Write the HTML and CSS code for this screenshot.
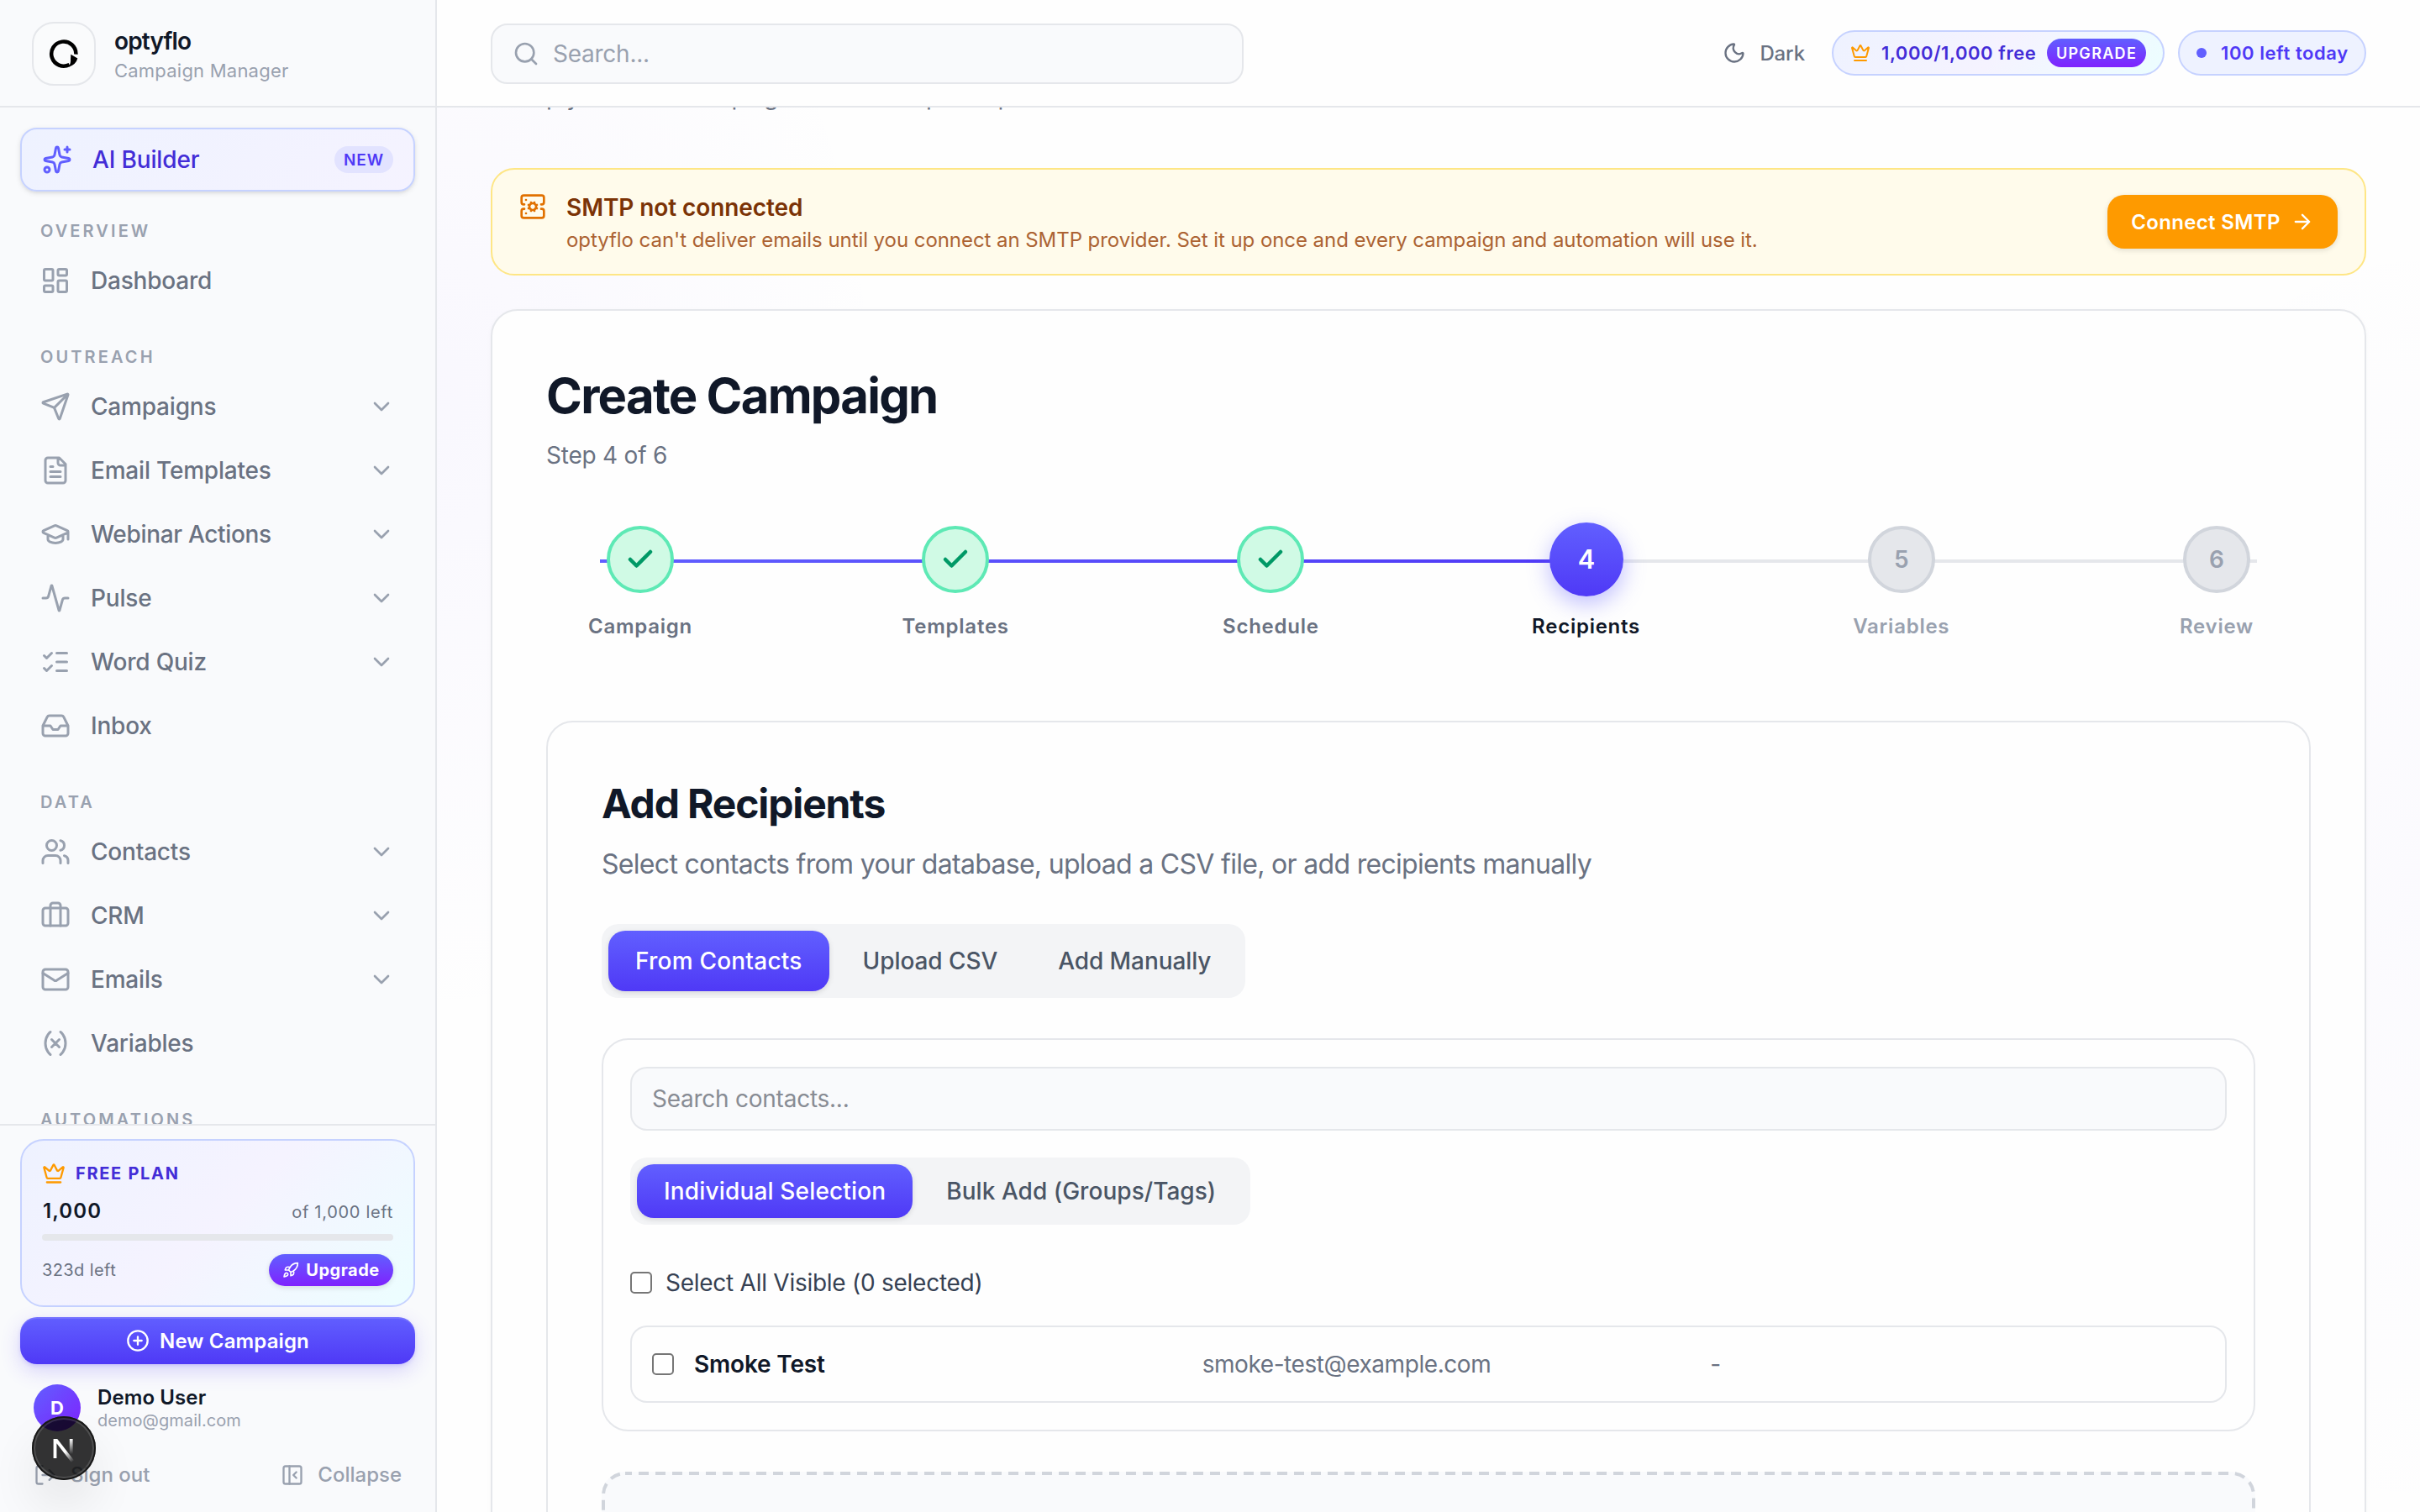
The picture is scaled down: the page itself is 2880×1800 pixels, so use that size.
FILE: index.html
```html
<!DOCTYPE html>
<html lang="en">
<head>
<meta charset="utf-8">
<title>optyflo – Create Campaign</title>
<link rel="stylesheet" href="styles.css">
</head>
<body>
<svg class="sprite" aria-hidden="true">
  <symbol id="sparkles" viewBox="0 0 24 24"><path d="M11.017 2.814a1 1 0 0 1 1.966 0l1.051 5.558a2 2 0 0 0 1.594 1.594l5.558 1.051a1 1 0 0 1 0 1.966l-5.558 1.051a2 2 0 0 0-1.594 1.594l-1.051 5.558a1 1 0 0 1-1.966 0l-1.051-5.558a2 2 0 0 0-1.594-1.594l-5.558-1.051a1 1 0 0 1 0-1.966l5.558-1.051a2 2 0 0 0 1.594-1.594z"/><path d="M20 2v4M22 4h-4"/><circle cx="4" cy="20" r="2"/></symbol>
  <symbol id="dashboard" viewBox="0 0 24 24"><rect x="3" y="3" width="7" height="9" rx="1"/><rect x="14" y="3" width="7" height="5" rx="1"/><rect x="14" y="12" width="7" height="9" rx="1"/><rect x="3" y="16" width="7" height="5" rx="1"/></symbol>
  <symbol id="send" viewBox="0 0 24 24"><path d="M14.536 21.686a.5.5 0 0 0 .937-.024l6.5-19a.496.496 0 0 0-.635-.635l-19 6.5a.5.5 0 0 0-.024.937l7.93 3.18a2 2 0 0 1 1.112 1.11zM21.854 2.147l-10.94 10.939"/></symbol>
  <symbol id="file" viewBox="0 0 24 24"><path d="M15 2H6a2 2 0 0 0-2 2v16a2 2 0 0 0 2 2h12a2 2 0 0 0 2-2V7ZM14 2v4a2 2 0 0 0 2 2h4M10 9H8M16 13H8M16 17H8"/></symbol>
  <symbol id="cap" viewBox="0 0 24 24"><path d="M21.42 10.922a1 1 0 0 0-.019-1.838L12.83 5.18a2 2 0 0 0-1.66 0L2.6 9.08a1 1 0 0 0 0 1.832l8.57 3.908a2 2 0 0 0 1.66 0zM22 10v6M6 12.5V16a6 3 0 0 0 12 0v-3.5"/></symbol>
  <symbol id="activity" viewBox="0 0 24 24"><path d="M22 12h-2.48a2 2 0 0 0-1.93 1.46l-2.35 8.36a.25.25 0 0 1-.48 0L9.24 2.18a.25.25 0 0 0-.48 0l-2.35 8.36A2 2 0 0 1 4.49 12H2"/></symbol>
  <symbol id="checks" viewBox="0 0 24 24"><path d="M13 5h8M13 12h8M13 19h8M3 17l2 2 4-4M3 7l2 2 4-4"/></symbol>
  <symbol id="inbox" viewBox="0 0 24 24"><path d="M22 12h-6l-2 3h-4l-2-3H2M5.45 5.11 2 12v6a2 2 0 0 0 2 2h16a2 2 0 0 0 2-2v-6l-3.45-6.89A2 2 0 0 0 16.76 4H7.24a2 2 0 0 0-1.79 1.11z"/></symbol>
  <symbol id="users" viewBox="0 0 24 24"><path d="M16 21v-2a4 4 0 0 0-4-4H6a4 4 0 0 0-4 4v2M16 3.128a4 4 0 0 1 0 7.744M22 21v-2a4 4 0 0 0-3-3.87"/><circle cx="9" cy="7" r="4"/></symbol>
  <symbol id="briefcase" viewBox="0 0 24 24"><path d="M16 20V4a2 2 0 0 0-2-2h-4a2 2 0 0 0-2 2v16"/><rect x="2" y="6" width="20" height="14" rx="2"/></symbol>
  <symbol id="mail" viewBox="0 0 24 24"><path d="m22 7-8.991 5.727a2 2 0 0 1-2.009 0L2 7"/><rect x="2" y="4" width="20" height="16" rx="2"/></symbol>
  <symbol id="variable" viewBox="0 0 24 24"><path d="M8 21s-4-3-4-9 4-9 4-9M16 3s4 3 4 9-4 9-4 9M15 9l-6 6M9 9l6 6"/></symbol>
  <symbol id="chevron" viewBox="0 0 24 24"><path d="m6 9 6 6 6-6"/></symbol>
  <symbol id="crown" viewBox="0 0 24 24"><path d="M11.562 3.266a.5.5 0 0 1 .876 0L15.39 8.87a1 1 0 0 0 1.516.294L21.183 5.5a.5.5 0 0 1 .798.519l-2.834 10.246a1 1 0 0 1-.956.734H5.81a1 1 0 0 1-.957-.734L2.02 6.02a.5.5 0 0 1 .798-.519l4.276 3.664a1 1 0 0 0 1.516-.294zM5 21h14"/></symbol>
  <symbol id="rocket" viewBox="0 0 24 24"><path d="M4.5 16.5c-1.5 1.26-2 5-2 5s3.74-.5 5-2c.71-.84.7-2.13-.09-2.91a2.18 2.18 0 0 0-2.91-.09zM12 15l-3-3a22 22 0 0 1 2-3.95A12.88 12.88 0 0 1 22 2c0 2.72-.78 7.5-6 11a22.35 22.35 0 0 1-4 2zM9 12H4s.55-3.03 2-4c1.62-1.08 5 0 5 0M12 15v5s3.03-.55 4-2c1.08-1.62 0-5 0-5"/></symbol>
  <symbol id="plus" viewBox="0 0 24 24"><circle cx="12" cy="12" r="10"/><path d="M8 12h8M12 8v8"/></symbol>
  <symbol id="logout" viewBox="0 0 24 24"><path d="m16 17 5-5-5-5M21 12H9M9 21H5a2 2 0 0 1-2-2V5a2 2 0 0 1 2-2h4"/></symbol>
  <symbol id="panel" viewBox="0 0 24 24"><rect x="3" y="3" width="18" height="18" rx="2"/><path d="M9 3v18M16 15l-3-3 3-3"/></symbol>
  <symbol id="search" viewBox="0 0 24 24"><circle cx="11" cy="11" r="8"/><path d="m21 21-4.34-4.34"/></symbol>
  <symbol id="moon" viewBox="0 0 24 24"><path d="M20.985 12.486a9 9 0 1 1-9.473-9.472c.405-.022.617.46.402.803a6 6 0 0 0 8.268 8.268c.344-.215.825-.004.803.401"/></symbol>
  <symbol id="cog" viewBox="0 0 24 24"><path d="m10.852 14.772-.383.923M13.148 14.772a3 3 0 1 0-2.296-5.544l-.383-.923M13.148 9.228l.383-.923M13.53 15.696l-.382-.924a3 3 0 1 1-2.296-5.544M14.772 10.852l.923-.383M14.772 13.148l.923.383M4.5 10H4a2 2 0 0 1-2-2V4a2 2 0 0 1 2-2h16a2 2 0 0 1 2 2v4a2 2 0 0 1-2 2h-.5M4.5 14H4a2 2 0 0 0-2 2v4a2 2 0 0 0 2 2h16a2 2 0 0 0 2-2v-4a2 2 0 0 0-2-2h-.5M6 18h.01M6 6h.01M9.228 10.852l-.923-.383M9.228 13.148l-.923.383"/></symbol>
  <symbol id="arrow" viewBox="0 0 24 24"><path d="M5 12h14M12 5l7 7-7 7"/></symbol>
  <symbol id="check" viewBox="0 0 24 24"><path d="M20 6 9 17l-5-5"/></symbol>
</svg>

<div class="app">
  <aside class="sidebar">
    <div class="brand">
      <div class="brand-mark">
        <svg width="36" height="36" viewBox="0 0 36 36"><path d="M32.4 18.6A14.6 14.6 0 1 0 24.6 31" fill="none" stroke="#000" stroke-width="4.5"/><path d="M26.3 18.8 34.3 23.6Q32.4 31 24 33.6 26.6 28 26 24.5Z"/></svg>
      </div>
      <div class="brand-text">
        <div class="brand-name">optyflo</div>
        <div class="brand-sub">Campaign Manager</div>
      </div>
    </div>

    <nav class="nav">
      <a class="ai-builder"><svg class="i36"><use href="#sparkles"/></svg><span class="grow">AI Builder</span><span class="new">NEW</span></a>

      <div class="section first">OVERVIEW</div>
      <a class="item"><svg class="i36"><use href="#dashboard"/></svg><span class="grow">Dashboard</span></a>

      <div class="section">OUTREACH</div>
      <a class="item"><svg class="i36"><use href="#send"/></svg><span class="grow">Campaigns</span><svg class="i32"><use href="#chevron"/></svg></a>
      <a class="item"><svg class="i36"><use href="#file"/></svg><span class="grow">Email Templates</span><svg class="i32"><use href="#chevron"/></svg></a>
      <a class="item"><svg class="i36"><use href="#cap"/></svg><span class="grow tight">Webinar Actions</span><svg class="i32"><use href="#chevron"/></svg></a>
      <a class="item"><svg class="i36"><use href="#activity"/></svg><span class="grow">Pulse</span><svg class="i32"><use href="#chevron"/></svg></a>
      <a class="item"><svg class="i36"><use href="#checks"/></svg><span class="grow">Word Quiz</span><svg class="i32"><use href="#chevron"/></svg></a>
      <a class="item"><svg class="i36"><use href="#inbox"/></svg><span class="grow">Inbox</span></a>

      <div class="section">DATA</div>
      <a class="item"><svg class="i36"><use href="#users"/></svg><span class="grow">Contacts</span><svg class="i32"><use href="#chevron"/></svg></a>
      <a class="item"><svg class="i36"><use href="#briefcase"/></svg><span class="grow">CRM</span><svg class="i32"><use href="#chevron"/></svg></a>
      <a class="item"><svg class="i36"><use href="#mail"/></svg><span class="grow">Emails</span><svg class="i32"><use href="#chevron"/></svg></a>
      <a class="item"><svg class="i36"><use href="#variable"/></svg><span class="grow">Variables</span></a>

      <div class="section">AUTOMATIONS</div>
    </nav>

    <div class="foot">
      <div class="plan">
        <div class="plan-title"><svg class="i28"><use href="#crown"/></svg>FREE PLAN</div>
        <div class="plan-count"><b>1,000</b><span>of 1,000 left</span></div>
        <div class="bar"></div>
        <div class="plan-foot"><span>323d left</span><a class="upgrade"><svg class="i20"><use href="#rocket"/></svg>Upgrade</a></div>
      </div>
      <a class="new-campaign"><svg class="i28"><use href="#plus"/></svg>New Campaign</a>
      <div class="user">
        <div class="avatar">D</div>
        <div><div class="user-name">Demo User</div><div class="user-mail">demo@gmail.com</div></div>
      </div>
      <div class="foot-links">
        <a><svg class="i28"><use href="#logout"/></svg>Sign out</a>
        <a><svg class="i28"><use href="#panel"/></svg>Collapse</a>
      </div>
    </div>
  </aside>

  <div class="main">
    <header class="top">
      <label class="search"><svg class="i32"><use href="#search"/></svg><span>Search...</span></label>
      <div class="top-right">
        <a class="theme"><svg class="i28"><use href="#moon"/></svg>Dark</a>
        <a class="pill credits"><svg class="i24"><use href="#crown"/></svg><span>1,000/1,000 free</span><b>UPGRADE</b></a>
        <div class="pill today"><i></i>100 left today</div>
      </div>
    </header>

    <main class="content">
      <p class="intro">Set up your email campaign in a few simple steps</p>

      <section class="banner">
        <svg class="i32"><use href="#cog"/></svg>
        <div class="grow">
          <div class="banner-title">SMTP not connected</div>
          <div class="banner-text">optyflo can't deliver emails until you connect an SMTP provider. Set it up once and every campaign and automation will use it.</div>
        </div>
        <a class="connect">Connect SMTP<svg class="i28"><use href="#arrow"/></svg></a>
      </section>

      <section class="card">
        <h1>Create Campaign</h1>
        <p class="step-count">Step 4 of 6</p>

        <ol class="steps">
          <li class="done"><span class="dot"><svg class="i36"><use href="#check"/></svg></span>Campaign</li>
          <li class="done"><span class="dot"><svg class="i36"><use href="#check"/></svg></span>Templates</li>
          <li class="done"><span class="dot"><svg class="i36"><use href="#check"/></svg></span>Schedule</li>
          <li class="current"><span class="dot">4</span>Recipients</li>
          <li><span class="dot">5</span>Variables</li>
          <li><span class="dot">6</span>Review</li>
        </ol>

        <section class="panel">
          <h2>Add Recipients</h2>
          <p class="panel-sub">Select contacts from your database, upload a CSV file, or add recipients manually</p>

          <div class="tabs">
            <a class="tab active">From Contacts</a>
            <a class="tab">Upload CSV</a>
            <a class="tab">Add Manually</a>
          </div>

          <div class="picker">
            <input class="field" type="text" placeholder="Search contacts...">
            <div class="tabs small">
              <a class="tab active">Individual Selection</a>
              <a class="tab">Bulk Add (Groups/Tags)</a>
            </div>
            <label class="select-all"><span class="box"></span>Select All Visible (0 selected)</label>
            <div class="row">
              <span class="box"></span>
              <div class="cells"><strong>Smoke Test</strong><span class="mail">smoke-test@example.com</span><span>-</span></div>
            </div>
          </div>

          <div class="dropzone"><svg viewBox="0 0 1968 400"><rect x="2" y="2" width="1964" height="396" rx="26"/></svg></div>
        </section>
      </section>
    </main>
  </div>
</div>

<div class="devtools">
  <svg width="76" height="76" viewBox="0 0 76 76">
    <defs>
      <linearGradient id="g1" gradientUnits="userSpaceOnUse" x1="40" y1="42" x2="49" y2="54"><stop offset="0" stop-color="#fff"/><stop offset="1" stop-color="#fff" stop-opacity="0"/></linearGradient>
      <linearGradient id="g2" gradientUnits="userSpaceOnUse" x1="47" y1="27" x2="47" y2="45"><stop offset="0" stop-color="#fff"/><stop offset="1" stop-color="#fff" stop-opacity="0"/></linearGradient>
    </defs>
    <path d="M25.6 50V27h4.6L50 52.6 47 55 29.4 32.2V50Z" fill="url(#g1)"/>
    <path d="M44.8 27h3.8v18h-3.8Z" fill="url(#g2)"/>
  </svg>
</div>
</body>
</html>
```
FILE: styles.css
```css
* { box-sizing: border-box; }
body, h1, h2, p, ol { margin: 0; padding: 0; }
html, body { height: 100%; overflow: hidden; }
body {
  font-family: Inter, "Liberation Sans", sans-serif;
  font-size: 28px;
  color: #101828;
  background: #fefefe;
}
.sprite { position: absolute; width: 0; height: 0; }
svg { flex: none; display: block; }
.i20, .i24, .i28, .i32, .i36 { fill: none; stroke: currentColor; stroke-width: 2; stroke-linecap: round; stroke-linejoin: round; }
.i20 { width: 20px; height: 20px; }
.i24 { width: 24px; height: 24px; }
.i28 { width: 28px; height: 28px; }
.i32 { width: 32px; height: 32px; }
.i36 { width: 36px; height: 36px; }
.grow { flex: 1; }

.app { display: flex; height: 1800px; }

/* Sidebar */
.sidebar {
  width: 520px; flex: none; height: 1800px;
  display: flex; flex-direction: column;
  background: #f9fafc;
  border-right: 2px solid #e5e7eb;
}
.brand {
  height: 128px; flex: none; padding: 0 38px;
  display: flex; align-items: center; gap: 22px;
  border-bottom: 2px solid #e5e7eb;
}
.brand-mark {
  width: 76px; height: 76px; margin-top: 2px;
  display: flex; align-items: center; justify-content: center;
  border: 2px solid #e5e7eb; border-radius: 26px; background: #fafbfc;
}
.brand-text { padding-top: 4px; }
.brand-name { font-weight: 600; line-height: 36px; letter-spacing: -.85px; }
.brand-sub { font-size: 22px; line-height: 32px; letter-spacing: .22px; color: #99a1af; margin-top: 1px; }

.nav { flex: 1; min-height: 0; overflow: hidden; padding: 24px; display: flex; flex-direction: column; }
.nav > * { flex: none; }
.ai-builder {
  height: 76px; padding: 0 24px; display: flex; align-items: center; gap: 24px;
  border: 2px solid #c6d2ff; border-radius: 20px;
  background: linear-gradient(135deg, #eef2ff, #f5f3ff);
  color: #432dd7; font-weight: 500; letter-spacing: -.15px;
  box-shadow: 0 2px 6px rgba(0,0,0,.1), 0 2px 4px -2px rgba(0,0,0,.1);
}
.ai-builder svg { color: #615fff; }
.new {
  height: 32px; width: 70px; border-radius: 16px; background: #e2e3ff;
  display: flex; align-items: center; justify-content: center;
  font-size: 19px; font-weight: 600; letter-spacing: .9px; color: #4f39f6;
}
.section {
  margin: 40px 0 8px; padding: 0 24px; line-height: 30px;
  font-size: 20px; font-weight: 600; letter-spacing: 3.1px; color: #99a1af;
}
.section.first { margin-top: 32px; }
.item {
  height: 72px; padding: 0 24px; display: flex; align-items: center; gap: 24px;
  font-weight: 500; letter-spacing: -.2px; color: #6a7282;
}
.item + .item { margin-top: 4px; }
.item svg { color: #99a1af; }
.item .tight { letter-spacing: -.33px; }

.foot { flex: none; height: 462px; padding: 16px 24px 0; border-top: 2px solid #e5e7eb; display: flex; flex-direction: column; }
.plan {
  height: 200px; padding: 24px; border: 2px solid #c6d2ff; border-radius: 28px;
  background: linear-gradient(135deg, #eef2ff, #f5f3ff 50%, #ecfeff);
  font-size: 20px; color: #6a7282;
}
.plan-title { display: flex; align-items: center; gap: 12px; height: 30px; font-weight: 700; letter-spacing: 1.7px; color: #432dd7; }
.plan-title svg, .credits svg { color: #fe9a00; }
.plan-count { display: flex; justify-content: space-between; align-items: baseline; margin-top: 12px; line-height: 36px; letter-spacing: .7px; }
.plan-count b { font-size: 24px; font-weight: 600; padding-left: 1px; letter-spacing: 1.1px; color: #101828; }
.bar { height: 8px; margin-top: 8px; border-radius: 4px; background: #e5e7eb; }
.plan-foot { display: flex; justify-content: space-between; align-items: center; margin-top: 16px; letter-spacing: .4px; }
.upgrade {
  height: 38px; width: 148px; border-radius: 19px; display: flex; align-items: center; justify-content: center; gap: 8px;
  background: linear-gradient(#615fff, #7f22fe); color: #fff; font-weight: 700; letter-spacing: .5px;
  box-shadow: 0 2px 6px rgba(0,0,0,.12);
}
.new-campaign {
  height: 56px; margin-top: 12px; border-radius: 20px; display: flex; align-items: center; justify-content: center; gap: 12px;
  background: linear-gradient(#615fff, #4f39f6); color: #fff; font-size: 24px; font-weight: 600; letter-spacing: .13px;
  box-shadow: inset 0 2px 0 rgba(255,255,255,.12), 0 2px 4px rgba(79,57,246,.15), 0 8px 24px rgba(79,57,246,.2);
}
.user { display: flex; gap: 20px; padding-left: 16px; margin-top: 24px; }
.avatar {
  width: 56px; height: 56px; border-radius: 50%; display: flex; align-items: center; justify-content: center;
  background: linear-gradient(135deg, #615fff, #7f22fe); color: #fff; font-size: 22px; font-weight: 700;
}
.user-name { font-size: 24px; font-weight: 600; line-height: 30px; padding-top: 1px; letter-spacing: .1px; }
.user-mail { font-size: 20px; line-height: 26px; margin-top: -1px; letter-spacing: .05px; color: #99a1af; }
.foot-links { display: flex; justify-content: space-between; margin-top: 34px; padding: 0 16px; font-size: 24px; font-weight: 500; color: #99a1af; }
.foot-links a { display: flex; align-items: center; gap: 16px; line-height: 36px; }

/* Top bar */
.main {
  flex: 1; min-width: 0; display: flex; flex-direction: column;
  background:
    radial-gradient(ellipse 540px 760px at 0 26%, rgba(124,92,255,.04), transparent),
    radial-gradient(ellipse 480px 800px at 100% 58%, rgba(124,92,255,.025), transparent),
    #fefefe;
}
.top {
  height: 128px; flex: none; padding: 0 64px; display: flex; align-items: center; justify-content: space-between;
  background: #fefefe; border-bottom: 2px solid #e5e7eb;
}
.search {
  width: 896px; height: 72px; margin-top: 2px; padding: 0 24px; display: flex; align-items: center; gap: 16px;
  border: 2px solid #e5e7eb; border-radius: 20px; background: #f9fafc; color: #99a1af; letter-spacing: -.25px;
}
.top-right { display: flex; align-items: center; }
.theme { display: flex; align-items: center; gap: 16px; margin-right: 32px; font-size: 24px; font-weight: 500; letter-spacing: -.1px; color: #6a7282; }
.pill {
  height: 54px; display: flex; align-items: center; border: 2px solid #c6d2ff; border-radius: 27px;
  font-size: 22px; font-weight: 600; letter-spacing: .58px; white-space: nowrap;
}
.credits { width: 396px; padding: 0 20px; gap: 12px; color: #432dd7; background: linear-gradient(135deg, #eef2ff, #f5f3ff 50%, #ecfeff); }
.credits span { flex: 1; padding-left: 1px; }
.credits b {
  width: 118px; height: 34px; border-radius: 17px; display: flex; align-items: center; justify-content: center;
  background: linear-gradient(#615fff, #7f22fe); color: #fff; font-size: 18px; font-weight: 600; letter-spacing: 1.3px;
}
.today { width: 224px; margin-left: 16px; padding-left: 20px; gap: 17px; color: #4f39f6; background: #eef2ff; }
.today i { width: 12px; height: 12px; border-radius: 50%; background: #615fff; }

/* Content */
.content { flex: 1; min-height: 0; overflow: hidden; padding: 0 64px; display: flex; flex-direction: column; }
.content > * { flex: none; }
.intro { height: 40px; margin-top: -33px; line-height: 40px; letter-spacing: -.38px; color: #6a7282; }
.banner {
  height: 128px; margin-top: 65px; padding: 24px 32px; display: flex; gap: 24px;
  border: 2px solid #fee685; border-radius: 28px; background: #fffbeb; color: #e17100;
}
.banner > svg { margin-top: 4px; }
.banner-title { font-weight: 600; line-height: 40px; letter-spacing: -.08px; padding-top: 1px; color: #7b3306; }
.banner-text { font-size: 24px; line-height: 32px; margin-top: 3px; letter-spacing: -.06px; color: #ac6333; white-space: nowrap; }
.connect {
  align-self: center; width: 274px; height: 64px; border-radius: 20px; display: flex; align-items: center; justify-content: center; gap: 12px;
  background: #fe9a00; color: #fff; font-size: 24px; font-weight: 600; letter-spacing: .34px;
  box-shadow: 0 2px 6px rgba(0,0,0,.12);
}
.card { height: 2000px; margin-top: 40px; padding: 64px; border: 2px solid #e5e7eb; border-radius: 32px; background: #fefefe; box-shadow: 0 2px 6px rgba(0,0,0,.03); }
h1 { font-size: 58px; line-height: 76px; font-weight: 700; letter-spacing: -1.75px; margin-top: -1px; }
.step-count { margin-top: 13px; line-height: 40px; letter-spacing: -.22px; color: #6a7282; }

.steps {
  list-style: none; display: flex; justify-content: space-between; margin-top: 64px;
  background: linear-gradient(90deg, #615fff, #4f39f6) 64px 40px / 1183px 4px no-repeat, linear-gradient(#e5e7eb, #e5e7eb) 64px 40px / 1972px 4px no-repeat;
}
.steps li { width: 224px; display: flex; flex-direction: column; align-items: center; gap: 24px; font-size: 24px; line-height: 32px; font-weight: 600; letter-spacing: .75px; color: #99a1af; }
.dot {
  width: 80px; height: 80px; border-radius: 50%; display: flex; align-items: center; justify-content: center;
  border: 4px solid #d1d5dc; background: #e5e7eb; font-size: 28px; letter-spacing: 0;
}
.steps .done { color: #6a7282; }
.done .dot { border-color: #5ee9b5; background: #d0fae5; color: #009966; }
.done svg { stroke-width: 3; }
.steps .current { color: #101828; }
.current .dot {
  border: 0; transform: scale(1.1); color: #fff;
  background: linear-gradient(#615fff, #4f39f6);
  box-shadow: 0 8px 24px rgba(97,95,255,.4);
}

.panel { margin-top: 96px; padding: 64px; height: 1500px; border: 2px solid #e5e7eb; border-radius: 32px; }
h2 { font-size: 48px; line-height: 64px; padding-top: 1px; font-weight: 700; letter-spacing: -1.15px; }
.panel-sub { margin-top: 16px; font-size: 32px; line-height: 48px; letter-spacing: -.69px; color: #6a7282; }
.tabs { width: 766px; height: 88px; margin-top: 47px; padding: 8px; display: flex; gap: 8px; border-radius: 20px; background: #f3f4f6; }
.tab { flex: none; padding: 0 32px; display: flex; align-items: center; border-radius: 20px; font-weight: 500; letter-spacing: -.08px; color: #4a5565; white-space: nowrap; }
.tab.active { background: linear-gradient(#615fff, #4f39f6); color: #fff; letter-spacing: .22px; box-shadow: 0 2px 6px rgba(0,0,0,.12); }
.picker { height: 468px; margin-top: 48px; padding: 32px; border: 2px solid #e5e7eb; border-radius: 32px; }
.field {
  display: block; width: 100%; height: 76px; padding: 0 24px; border: 2px solid #e5e7eb; border-radius: 20px;
  background: #f9fafc; font: inherit; letter-spacing: -.25px;
}
.field::placeholder { color: #888c94; opacity: 1; }
.tabs.small { width: 738px; height: 80px; margin-top: 32px; }
.small .tab { letter-spacing: .04px; }
.small .tab.active { letter-spacing: .16px; }
.select-all { display: flex; align-items: center; gap: 16px; margin-top: 48px; height: 42px; color: #364153; letter-spacing: -.26px; }
.box { flex: none; width: 26px; height: 26px; border: 2px solid #767676; border-radius: 5px; background: #fff; }
.row { height: 92px; margin-top: 30px; padding: 0 24px; display: flex; align-items: center; gap: 24px; border: 2px solid #e5e7eb; border-radius: 20px; }
.cells { flex: 1; display: grid; grid-template-columns: repeat(3, 1fr); gap: 16px; color: #6a7282; }
.cells strong { font-weight: 600; letter-spacing: -.18px; color: #101828; }
.mail { letter-spacing: -.43px; }
.dropzone { height: 400px; margin-top: 48px; border-radius: 28px; background: #f9fafc; }
.dropzone svg { width: 100%; height: 400px; fill: none; stroke: #d1d5dc; stroke-width: 4; stroke-dasharray: 12 8; stroke-dashoffset: 4; }

/* Floating dev indicator */
.devtools {
  position: absolute; left: 38px; top: 1686px; width: 76px; height: 76px; border-radius: 50%;
  background: rgba(0,0,0,.8);
  box-shadow: 0 0 0 2px #171717 inset, inset 0 0 0 4px rgba(255,255,255,.14), 0 32px 64px -16px rgba(0,0,0,.24);
}
```
